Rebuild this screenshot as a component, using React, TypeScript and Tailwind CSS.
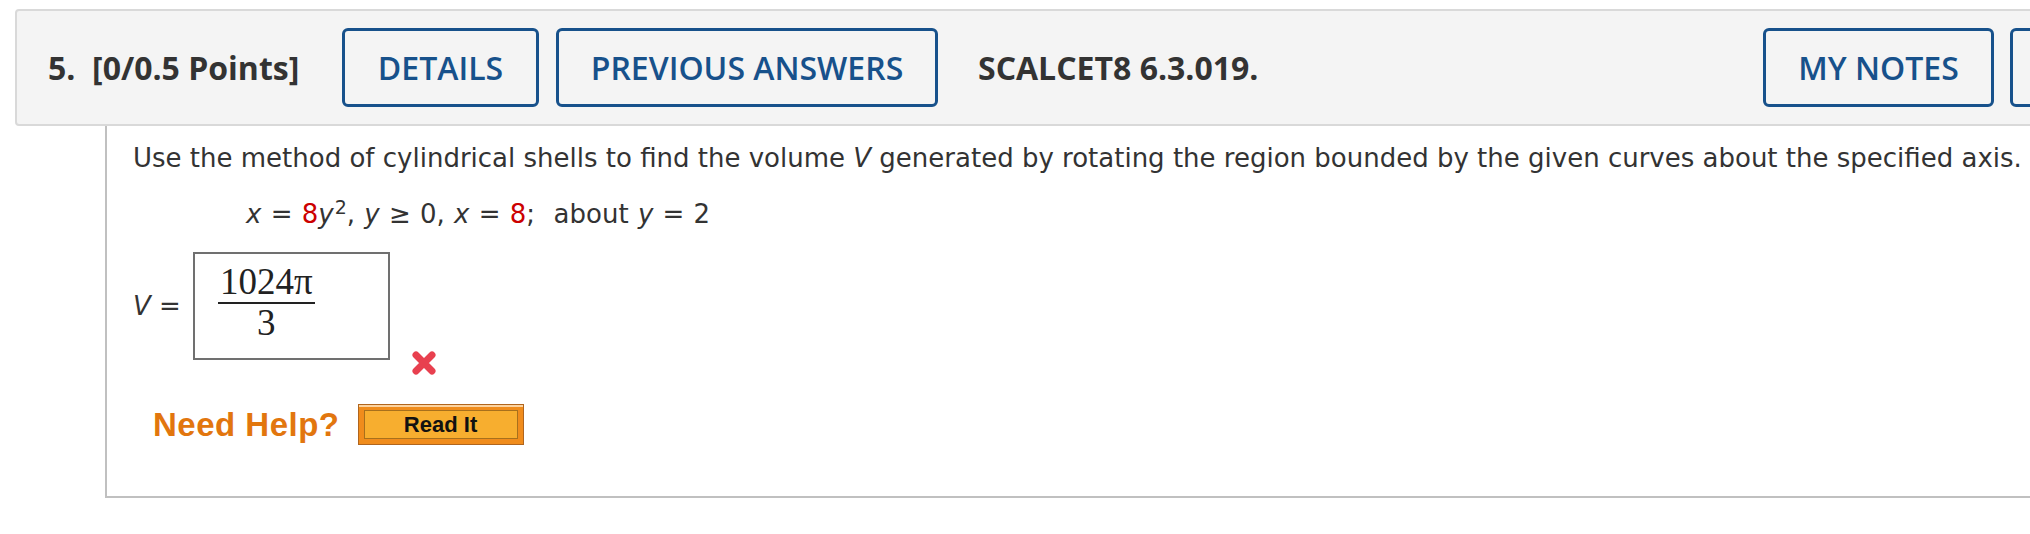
export default function App() {
  return (
    <div className="w-[2030px] h-[534px] overflow-hidden bg-white pt-[9px]">
      {/* question header */}
      <div className="ml-[15px] w-[2390px] h-[117px] bg-[#f4f4f4] border-2 border-[#d9d9d9] rounded-[4px] flex items-center pl-[31px] pr-[13px] font-['Open_Sans',sans-serif]">
        <div className="w-[294px] shrink-0 text-[32px] font-bold text-[#333]">5.&nbsp; [0/0.5 Points]</div>
        <button className="w-[197px] h-[79px] shrink-0 border-[3px] border-[#17518b] rounded-[6px] flex items-center justify-center text-[#17518b] font-semibold text-[32px]">
          DETAILS
        </button>
        <button className="ml-[17px] w-[382px] h-[79px] shrink-0 border-[3px] border-[#17518b] rounded-[6px] flex items-center justify-center text-[#17518b] font-semibold text-[32px]">
          PREVIOUS ANSWERS
        </button>
        <div className="ml-[40px] text-[32px] font-bold text-[#333]">SCALCET8 6.3.019.</div>
        <div className="flex-1" />
        <button className="w-[231px] h-[79px] shrink-0 border-[3px] border-[#17518b] rounded-[6px] flex items-center justify-center text-[#17518b] font-semibold text-[32px]">
          MY NOTES
        </button>
        {/* next button, only its left edge is in view */}
        <button className="ml-[16px] w-[380px] h-[79px] shrink-0 border-[3px] border-[#17518b] rounded-[6px]" aria-label="Ask your teacher" />
      </div>

      {/* question body */}
      <div className="ml-[105px] h-[372px] border-l-2 border-b-2 border-[#c0c0c0] pl-[26px] font-['DejaVu_Sans',sans-serif] text-[#333]">
        <p className="pt-[17px] text-[26px] leading-[30px] whitespace-nowrap">
          Use the method of cylindrical shells to find the volume <i>V</i> generated by rotating the region bounded by the given curves about the specified axis.
        </p>
        <p className="mt-[26px] ml-[113px] text-[26px] leading-[30px] whitespace-nowrap [word-spacing:1px]">
          <i>x</i> = <span className="text-[#cc0000]">8</span><i>y</i>
          <sup className="text-[19px] ml-[1px]">2</sup>, <i>y</i> ≥ 0, <i>x</i> = <span className="text-[#cc0000]">8</span>;&nbsp;&nbsp;about <i>y</i> = 2
        </p>

        <div className="mt-[23px] flex items-start">
          <div className="h-[108px] flex items-center text-[26px] w-[60px]">
            <i>V</i>&nbsp;=
          </div>
          <div className="w-[197px] h-[108px] border-2 border-[#707070] pl-[23px] pt-[10px]">
            <div className="inline-flex flex-col items-center font-['Liberation_Serif',serif] text-[37px] leading-[36px] text-[#222]">
              <span className="px-[2px]">1024π</span>
              <span className="mt-[2px] h-[2px] w-full bg-[#222]" />
              <span className="mt-[1px]">3</span>
            </div>
          </div>
          <svg className="ml-[20px] mt-[97px]" width="28" height="28" viewBox="0 0 28 28">
            <path d="M6 6 L22 22 M22 6 L6 22" stroke="#e8404f" strokeWidth="7" strokeLinecap="round" />
          </svg>
        </div>

        <div className="mt-[23px] ml-[20px] flex items-center">
          <span className="font-['Liberation_Sans',sans-serif] font-bold text-[33px] tracking-[0.5px] text-[#e2760e]">Need Help?</span>
          <div className="ml-[18px] w-[166px] h-[41px] border border-[#b0651e] bg-[#f08c1c] p-[5px] shadow-[inset_0_2px_0_#fcd3a0]">
            <div className="w-full h-full border border-[#a8701c] bg-[#f7ae2f] flex items-center justify-center font-['Liberation_Sans',sans-serif] font-bold text-[22px] text-[#111]">
              Read It
            </div>
          </div>
        </div>
      </div>
    </div>
  );
}
